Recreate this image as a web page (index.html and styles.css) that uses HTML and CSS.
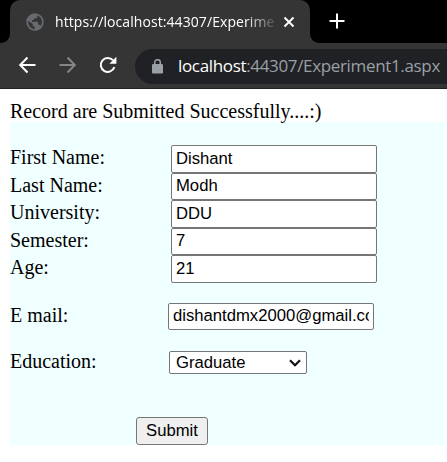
FILE: index.html
```
<!DOCTYPE html>
<html lang="en">
<head>
<meta charset="utf-8">
<title>Experiment1</title>
<link rel="stylesheet" href="styles.css">
</head>
<body>
<header class="browser">
  <div class="tabs">
    <div class="corner"></div>
    <div class="tab">
      <svg class="globe" width="18" height="18" viewBox="0 0 18 18"><circle cx="9" cy="9" r="8.7" fill="#676b70"/><path d="M2.2 7.7L6.8 11v1.7l2 1.3v2.1C5.1 16 1.8 12.9 2.2 7.7zM11.3 2.2v1.4c0 1-.8 1.8-1.8 1.8H7.8v1.7H6v1.7h5.2c.6 0 .9.5.9.9v2.1h1.2c.7 0 1.3.5 1.6 1.1 2.2-3.8 1.2-8.5-3.6-10.7z" fill="#353535"/></svg>
      <span class="title">https://localhost:44307/Experime</span>
      <svg class="close" width="12" height="12" viewBox="0 0 12 12"><path d="M1.5 1.5l9 9m0-9l-9 9" stroke="#fff" stroke-width="1.9"/></svg>
    </div>
    <div class="strip-end">
      <svg width="16" height="16" viewBox="0 0 16 16"><path d="M8 .5v15M.5 8h15" stroke="#fff" stroke-width="2"/></svg>
    </div>
  </div>
  <nav class="toolbar">
    <svg class="back" width="18" height="18" viewBox="0 0 18 18"><path d="M17.5 9H2.5M9.5 1.5L2.2 9l7.3 7.5" fill="none" stroke="#fff" stroke-width="2"/></svg>
    <svg class="forward" width="18" height="18" viewBox="0 0 18 18"><path d="M.5 9h15M8.500 1.500L15.800 9l-7.300 7.500" fill="none" stroke="#858585" stroke-width="2"/></svg>
    <svg class="reload" width="18" height="18" viewBox="0 0 18 18"><path d="M15.400 11.200A7 7 0 1 1 14 4.200" fill="none" stroke="#fff" stroke-width="2"/><path d="M17.400 .8v7h-7z" fill="#fff"/></svg>
    <div class="address">
      <svg width="11" height="15" viewBox="0 0 11 15"><path d="M2.700 6V3.500a2.800 2.800 0 0 1 5.600 0V6" fill="none" stroke="#9aa0a6" stroke-width="1.5"/><rect y="5" width="11" height="9.5" rx="1.2" fill="#9aa0a6"/></svg>
      <span class="url"><b>localhost</b>:44307/Experiment1.aspx</span>
    </div>
  </nav>
</header>
<main>
  <p class="message">Record are Submitted Successfully....:)</p>
  <form class="panel">
    <div class="row"><label for="first">First Name:</label><input id="first" value="Dishant"></div>
    <div class="row"><label for="last">Last Name:</label><input id="last" value="Modh"></div>
    <div class="row"><label for="uni">University:</label><input id="uni" value="DDU"></div>
    <div class="row"><label for="sem">Semester:</label><input id="sem" value="7"></div>
    <div class="row"><label for="age">Age:</label><input id="age" value="21"></div>
    <div class="row email"><label for="email">E mail:</label><input id="email" value="dishantdmx2000@gmail.com"></div>
    <div class="row education"><label for="edu">Education:</label>
      <div class="select" id="edu"><span>Graduate</span><svg width="12" height="8" viewBox="0 0 12 8"><path d="M1 1.2l5 5 5-5" fill="none" stroke="#111" stroke-width="2.2"/></svg></div>
    </div>
    <button class="submit" type="button">Submit</button>
  </form>
</main>
</body>
</html>
```
FILE: styles.css
```
* { box-sizing: border-box; }
html { overflow: hidden; }
body { margin: 0; background: #fff; color: #000; font-family: "Liberation Serif", serif; }
svg { display: block; flex: none; }
.browser { background: #353535; height: 89px; border-bottom: 1px solid #202124; font-family: "Open Sans", sans-serif; color: #fff; overflow: hidden; }
.tabs { display: flex; height: 43px; }
.corner { width: 10px; background: #000; border-bottom-right-radius: 9px; }
.tab { width: 300px; display: flex; align-items: center; padding: 0 15px 0 16px; background: linear-gradient(#000, #000) left top / 12px 12px no-repeat, linear-gradient(#000, #000) right top / 12px 12px no-repeat; position: relative; z-index: 0; }
.tab::before { content: ""; position: absolute; inset: 0; z-index: -1; background: #353535; border-radius: 10px 10px 0 0; }
.title { width: 222px; margin-left: 11px; white-space: nowrap; font-size: 14px; line-height: 24px; letter-spacing: 0.08px; -webkit-mask-image: linear-gradient(90deg, #000 190px, transparent 224px); mask-image: linear-gradient(90deg, #000 190px, transparent 224px); }
.close { margin-left: auto; }
.strip-end { flex: 1; background: #000; border-bottom-left-radius: 9px; padding: 13px 0 0 19px; }
.toolbar { height: 45px; display: flex; align-items: center; padding: 0 0 1px 18px; }
.forward { margin-left: 23px; }
.reload { margin-left: 22px; }
.address { margin: 2px 0 0 18px; flex: 1; height: 35px; border-radius: 18px 0 0 18px; background: #202124; display: flex; align-items: center; padding-left: 17px; }
.url { margin: -2px 0 0 15px; color: #9aa0a6; white-space: nowrap; font-size: 17px; letter-spacing: -0.34px; }
.url b { font-weight: 400; color: #fff; }
main { padding: 10px 0 0 10px; font-size: 20px; }
.message { margin: 0; height: 23px; line-height: 24px; white-space: nowrap; }
.panel { height: 323px; background: #f0ffff; padding-top: 23px; }
.row { display: flex; height: 27.5px; }
.row label { width: 161px; line-height: 25px; }
input { width: 206px; height: 27.5px; margin: 0; padding: 1px 4px; border: 1px solid #767676; border-radius: 2px; background: #fff; color: #000; font: 16.67px "Liberation Sans", Arial, sans-serif; }
.email { margin-top: 20px; }
.email label { width: 158px; }
.education { margin-top: 21px; }
.education label { width: 159px; line-height: 21px; }
.select { width: 138px; height: 23px; border: 1px solid #767676; border-radius: 2px; background: #fff; display: flex; align-items: center; justify-content: space-between; padding: 0 5px 0 6px; font: 16.67px "Liberation Sans", Arial, sans-serif; }
.submit { display: block; width: 72px; height: 28px; margin: 38px 0 0 126px; padding: 0; border: 1px solid #767676; border-radius: 3px; background: #efefef; color: #000; font: 16.67px "Liberation Sans", Arial, sans-serif; }
```
